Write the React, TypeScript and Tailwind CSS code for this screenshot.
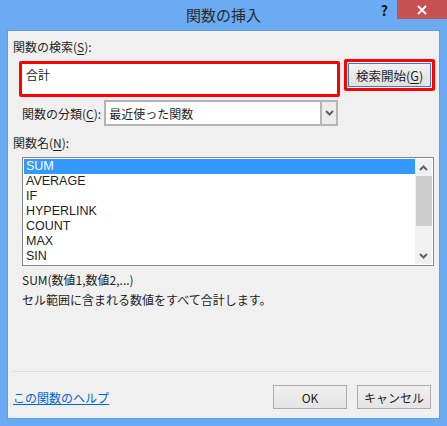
import React from 'react';

const jp = { fontFamily: '"Noto Sans CJK JP", "Noto Sans", sans-serif' };

const functions = ['SUM', 'AVERAGE', 'IF', 'HYPERLINK', 'COUNT', 'MAX', 'SIN'];

function Chevron({ up = false }: { up?: boolean }) {
  return (
    <svg width="9" height="6" viewBox="0 0 9 6" className={up ? 'rotate-180' : ''}>
      <path d="M1 1 L4.5 4.5 L8 1" fill="none" stroke="#606060" strokeWidth="2" />
    </svg>
  );
}

function Key({ k }: { k: string }) {
  return <span className="underline underline-offset-2">{k}</span>;
}

export default function App() {
  return (
    <div className="w-[447px] h-[426px] bg-[#6aabf4] flex flex-col text-[12px] text-[#1e1e1e]" style={jp}>
      {/* title bar */}
      <div className="h-[30px] grid grid-cols-[1fr_auto_1fr] items-start">
        <div />
        <div className="pt-[4px] text-[15px] leading-[22px] text-[#2b2b2b]">関数の挿入</div>
        <div className="flex justify-end items-start">
          <span className="mt-[2px] mr-[9px] text-[14px] font-bold leading-[16px] text-[#1a1a1a]">?</span>
          <div className="w-[50px] h-[19px] bg-[#c75050] flex items-center justify-center">
            <svg width="10" height="10" viewBox="0 0 10 10">
              <path d="M1 1 L9 9 M9 1 L1 9" stroke="white" strokeWidth="2" />
            </svg>
          </div>
        </div>
      </div>

      {/* client area */}
      <div className="mx-[7px] mb-[7px] flex-1 bg-[#f0f0f0] border border-[#5d9de6] flex flex-col pl-[5px] pr-[4px]">
        <div className="mt-[7px] leading-[17px]">
          関数の検索(<Key k="S" />):
        </div>

        <div className="flex mt-[4px] h-[37px]">
          <div className="ml-[6px] w-[322px] h-[36px] mt-[2px] border-[3px] border-[#ff0000] rounded-[2px] bg-white px-[4px] pt-[2px] leading-[17px]">
            合計
          </div>
          <div className="ml-[4px] w-[91px] h-[32px] border-[3px] border-[#ff0000] rounded-[2px] p-[1px]">
            <div className="h-full border border-[#3c7fb1] bg-gradient-to-b from-[#f2f2f2] to-[#e1e1e1] flex items-center justify-center leading-[17px] text-[12.5px]">
              検索開始(<Key k="G" />)
            </div>
          </div>
        </div>

        <div className="flex items-center mt-[4px] ml-[9px] h-[26px]">
          <span className="leading-[17px]">
            関数の分類(<Key k="C" />):
          </span>
          <div className="ml-[3px] w-[234px] h-[26px] border-2 border-[#b4b4b4] bg-white flex">
            <div className="flex-1 pl-[3px] flex items-center leading-[17px]">最近使った関数</div>
            <div className="w-[16px] bg-[#ececec] border-l-2 border-[#b4b4b4] flex items-center justify-center">
              <Chevron />
            </div>
          </div>
        </div>

        <div className="mt-[8px] leading-[17px]">
          関数名(<Key k="N" />):
        </div>

        <div className="mt-[6px] ml-[9px] w-[412px] h-[109px] border border-[#828790] bg-white flex">
          <div className="flex-1 pl-[1px] pt-[1px] text-[12.5px] font-['Liberation_Sans',sans-serif]">
            {functions.map((f, i) => (
              <div
                key={f}
                className={`h-[15px] pl-[2px] leading-[15px] ${i === 0 ? 'bg-[#3399ff] text-white' : ''}`}
              >
                {f}
              </div>
            ))}
          </div>
          <div className="w-[17px] mr-[1px] my-[1px] bg-[#f0f0f0] flex flex-col items-center">
            <div className="h-[17px] flex items-center justify-center">
              <Chevron up />
            </div>
            <div className="w-[16px] h-[50px] bg-[#cdcdcd]" />
            <div className="flex-1" />
            <div className="h-[17px] flex items-center justify-center">
              <Chevron />
            </div>
          </div>
        </div>

        <div className="ml-[9px] mt-[4px] leading-[20px]">SUM(数値1,数値2,...)</div>
        <div className="ml-[9px] leading-[20px]">セル範囲に含まれる数値をすべて合計します。</div>

        <div className="flex-1" />

        <div className="h-px bg-[#dcdcdc] mr-[3px]" />

        <div className="flex items-center mt-[13px] mb-[9px]">
          <span className="text-[#0066cc] underline leading-[17px]">この関数のヘルプ</span>
          <div className="flex-1" />
          <button className="w-[74px] h-[24px] border border-[#acacac] bg-gradient-to-b from-[#f0f0f0] to-[#e5e5e5] leading-[17px]">
            OK
          </button>
          <button className="ml-[10px] mr-[4px] w-[74px] h-[24px] border border-[#acacac] bg-gradient-to-b from-[#f0f0f0] to-[#e5e5e5] leading-[17px]">
            キャンセル
          </button>
        </div>
      </div>
    </div>
  );
}
